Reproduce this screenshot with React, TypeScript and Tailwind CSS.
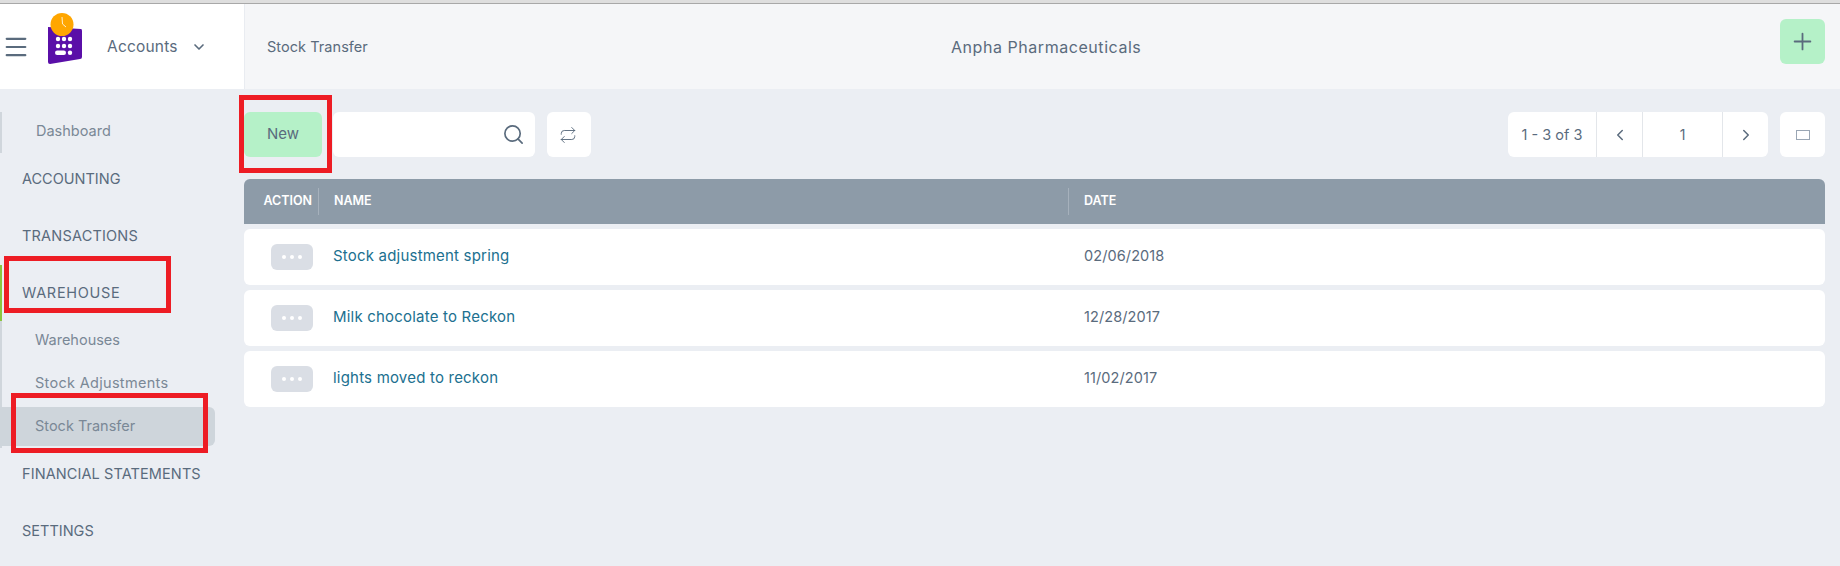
import { ChevronDown, ChevronLeft, ChevronRight, Menu, Plus, Repeat, Search } from "lucide-react"

const rows = [
  { name: "Stock adjustment spring", date: "02/06/2018" },
  { name: "Milk chocolate to Reckon", date: "12/28/2017" },
  { name: "lights moved to reckon", date: "11/02/2017" },
]

function Logo() {
  return (
    <svg width="36" height="53" viewBox="0 0 36 53" className="shrink-0">
      <path d="M1 14 L34 16 Q35 16 35 18 L35 44 Q35 46 33 46 L3 51 Q1 51 1 49 Z" fill="#5a0fa8" />
      <circle cx="15" cy="11.5" r="11.5" fill="#ffa600" />
      <path d="M15 4 L15.5 11 L19 14" fill="none" stroke="#fff0d0" strokeWidth="1" />
      <g fill="#fff">
        <circle cx="11" cy="26" r="2.2" />
        <circle cx="17" cy="26" r="2.2" />
        <circle cx="23" cy="26" r="2.2" />
        <circle cx="11" cy="33" r="2.2" />
        <circle cx="17" cy="33" r="2.2" />
        <circle cx="23" cy="33" r="2.2" />
        <rect x="8" y="37.5" width="11" height="4.5" rx="2.2" />
        <circle cx="23" cy="39.7" r="2.2" />
      </g>
    </svg>
  )
}

function RedBox({ className }: { className: string }) {
  return <div className={`absolute z-10 border-[5px] border-[#ed1c24] pointer-events-none ${className}`} />
}

export default function App() {
  return (
    <div className="relative w-[1840px] h-[566px] overflow-hidden bg-[#ebeef3] text-[#5a6b7d] font-['Inter','Noto_Sans',sans-serif]">
      {/* browser edge */}
      <div className="h-1 bg-[#dedede] border-b border-[#a8a8a8]" />

      {/* Header */}
      <header className="flex h-[85px]">
        <div className="flex w-[245px] shrink-0 items-center bg-white border-r border-[#e9ecf1] pl-[2px]">
          <Menu className="w-7 h-7 shrink-0" strokeWidth={1.8} />
          <div className="ml-[17px] -mt-[15px]">
            <Logo />
          </div>
          <span className="ml-6 mt-[1px] text-[15.5px] tracking-[0.2px]">Accounts</span>
          <ChevronDown className="ml-[13px] w-4 h-4" strokeWidth={2.5} />
        </div>
        <div className="flex flex-1 items-center bg-[#f5f6f8] pl-[22px] pr-[15px]">
          <span className="w-[300px] text-[14.5px] tracking-[0.05px]">Stock Transfer</span>
          <span className="flex-1 mt-[1px] pl-[384px] text-[16px] tracking-[0.55px]">Anpha Pharmaceuticals</span>
          <button className="flex items-center justify-center w-[45px] h-[45px] -mt-[10px] rounded-md bg-[#b5f1c8]">
            <Plus className="w-[27px] h-[27px]" strokeWidth={1.6} />
          </button>
        </div>
      </header>

      <div className="flex">
        {/* Sidebar */}
        <aside className="w-[244px] shrink-0 pt-[23px] text-[14.5px]">
          <div className="flex items-center h-[41px] pb-1 pl-[34px] text-[#7a8896] border-l-2 border-[#d0d6dc]">Dashboard</div>
          <div className="flex items-center h-[34px] mt-[9px] pl-[22px]">ACCOUNTING</div>
          <div className="flex items-center h-[34px] mt-[23px] pl-[22px] tracking-[0.2px]">TRANSACTIONS</div>
          <div className="flex items-center h-[56px] mt-[12px] pl-5 tracking-[0.7px] border-l-2 border-[#8cc63f]">WAREHOUSE</div>
          <div className="pb-[2px] border-l-2 border-[#d0d6dc] text-[#7a8896]">
            <div className="flex items-center h-[37px] pl-[33px]">Warehouses</div>
            <div className="flex items-center h-[49px] pl-[33px] tracking-[0.3px]">Stock Adjustments</div>
            <div className="flex items-center h-[39px] w-[215px] pb-[2px] pl-[35px] -ml-[2px] bg-[#ced5db] rounded-r-md">
              Stock Transfer
            </div>
          </div>
          <div className="flex items-center h-[34px] mt-[9px] pl-[22px] tracking-[0.1px]">FINANCIAL STATEMENTS</div>
          <div className="flex items-center h-[34px] mt-[23px] pl-[22px]">SETTINGS</div>
        </aside>

        {/* Main */}
        <main className="w-[1581px] pt-[23px]">
          <div className="flex h-[45px]">
            <button className="w-[78px] rounded-md bg-[#b5f1c8] text-[15px]">New</button>
            <div className="flex items-center justify-end ml-[11px] w-[202px] rounded-md bg-white pr-[10px]">
              <Search className="w-[23px] h-[23px]" strokeWidth={1.75} />
            </div>
            <div className="flex items-center justify-center ml-3 w-[44px] rounded-md bg-white">
              <Repeat className="w-[18px] h-[18px] -ml-[2px]" strokeWidth={1.25} />
            </div>
            <div className="flex ml-auto w-[260px] rounded-md bg-white">
              <div className="flex items-center justify-center w-[89px] text-[14.5px] border-r border-[#e3e6ea]">1 - 3 of 3</div>
              <div className="flex items-center justify-center w-[46px] border-r border-[#e3e6ea]">
                <ChevronLeft className="w-[18px] h-[18px]" strokeWidth={2} />
              </div>
              <div className="flex items-center justify-center w-[80px] text-[14px] border-r border-[#e3e6ea]">1</div>
              <div className="flex items-center justify-center flex-1">
                <ChevronRight className="w-[18px] h-[18px]" strokeWidth={2} />
              </div>
            </div>
            <div className="flex items-center justify-center ml-3 w-[45px] rounded-md bg-white">
              <div className="w-[14px] h-[10px] border border-[#9aa6b4]" />
            </div>
          </div>

          {/* Table */}
          <div className="mt-[22px]">
            <div className="flex items-center h-[45px] pb-[1px] rounded-t-md bg-[#8d9ba8] text-white text-[12.5px] font-semibold">
              <div className="flex items-center justify-end w-[75px] h-[27px] pr-[6px] border-r border-[#a6b1bc]">ACTION</div>
              <div className="flex items-center w-[750px] h-[27px] pl-[15px] border-r border-[#a6b1bc]">NAME</div>
              <div className="pl-[15px]">DATE</div>
            </div>
            <div className="flex flex-col gap-[5px] mt-[5px]">
              {rows.map((row) => (
                <div key={row.name} className="flex items-center h-[56px] rounded-md bg-white text-[15px]">
                  <div className="w-[75px] pl-[27px]">
                    <div className="flex items-center justify-center gap-[4px] w-[42px] h-[26px] rounded-md bg-[#dadee5]">
                      <span className="w-1 h-1 rounded-full bg-white" />
                      <span className="w-1 h-1 rounded-full bg-white" />
                      <span className="w-1 h-1 rounded-full bg-white" />
                    </div>
                  </div>
                  <div className="w-[750px] pb-[2px] pl-[14px] pr-[1px] text-[#20708f] tracking-[0.2px]">{row.name}</div>
                  <div className="pb-[2px] pl-[15px] text-[14.5px] tracking-[0.1px]">{row.date}</div>
                </div>
              ))}
            </div>
          </div>
        </main>
      </div>

      {/* annotation boxes */}
      <RedBox className="left-[239px] top-[95px] w-[93px] h-[78px]" />
      <RedBox className="left-[4px] top-[256px] w-[167px] h-[57px]" />
      <RedBox className="left-[11px] top-[393px] w-[197px] h-[60px]" />
    </div>
  )
}
